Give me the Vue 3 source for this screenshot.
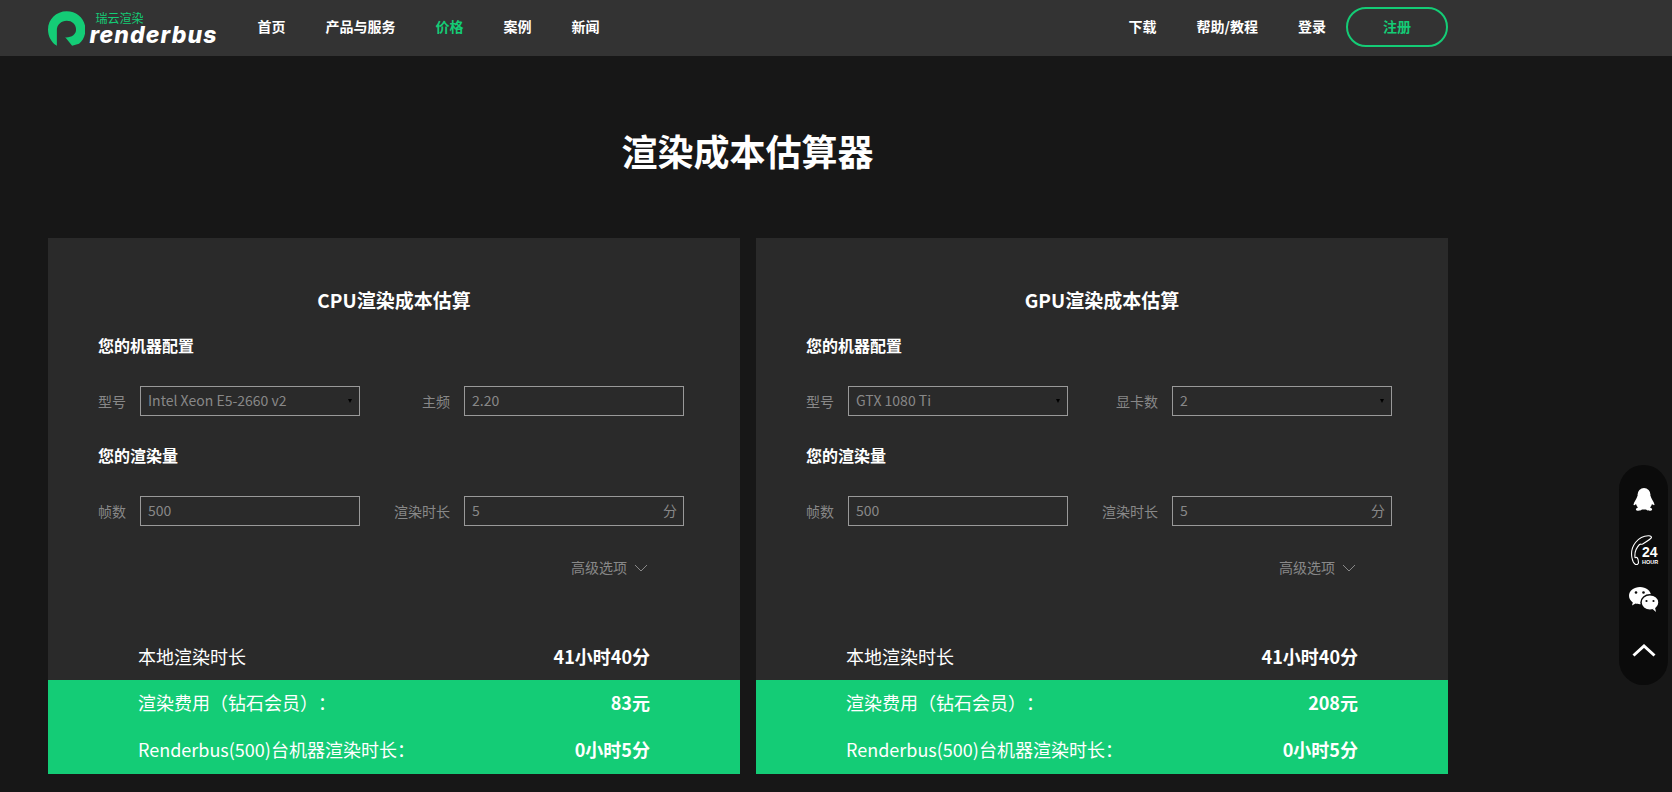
<script setup>
const navLeft = [
  { name: '首页' },
  { name: '产品与服务' },
  { name: '价格', active: true },
  { name: '案例' },
  { name: '新闻' }
]
const navRight = ['下载', '帮助/教程', '登录']

const cards = [
  {
    title: 'CPU渲染成本估算',
    model: 'Intel Xeon E5-2660 v2',
    secondLabel: '主频',
    secondValue: '2.20',
    secondSelect: false,
    fee: '83元'
  },
  {
    title: 'GPU渲染成本估算',
    model: 'GTX 1080 Ti',
    secondLabel: '显卡数',
    secondValue: '2',
    secondSelect: true,
    fee: '208元'
  }
]
</script>

<template>
  <div class="page">
    <header class="header">
      <div class="header-inner">
        <a class="logo">
          <svg class="logo-mark" width="38" height="36" viewBox="0 0 38 36">
            <path d="M9 35 C3.500 31.800 0 25.700 0 18.500 C0 8 8.500 0 19 0 C29.500 0 38 8 38 18.500 C38 24.500 35.500 29.800 31.500 33 L24.500 35 L17.500 26.500 C24 26.800 28.500 23.500 28.500 18.500 C28.500 13 24.500 9.500 19 9.500 C13.500 9.500 9 13.500 9 19 Z" fill="#14cc76" />
          </svg>
          <span class="logo-text">
            <span class="logo-cn">瑞云渲染</span>
            <span class="logo-en">renderbus</span>
          </span>
        </a>
        <nav class="nav">
          <a v-for="item in navLeft" :key="item.name" class="nav-item" :class="{ active: item.active }">{{ item.name }}</a>
        </nav>
        <nav class="nav nav-right">
          <a v-for="item in navRight" :key="item" class="nav-item">{{ item }}</a>
          <a class="register">注册</a>
        </nav>
      </div>
    </header>

    <main class="main">
      <h1 class="page-title">渲染成本估算器</h1>
      <div class="cards">
        <section v-for="card in cards" :key="card.title" class="card">
          <h2 class="card-title">{{ card.title }}</h2>
          <div class="form">
            <h3 class="section-title">您的机器配置</h3>
            <div class="form-row">
              <label class="label">型号</label>
              <div class="field select">{{ card.model }}</div>
              <label class="label label-second">{{ card.secondLabel }}</label>
              <div class="field" :class="{ select: card.secondSelect }">{{ card.secondValue }}</div>
            </div>
            <h3 class="section-title">您的渲染量</h3>
            <div class="form-row">
              <label class="label">帧数</label>
              <div class="field">500</div>
              <label class="label label-second">渲染时长</label>
              <div class="field">5<span class="unit">分</span></div>
            </div>
            <div class="advanced">
              <span>高级选项</span>
              <svg width="14" height="8" viewBox="0 0 14 8">
                <path d="M1 1 L7 7 L13 1" fill="none" stroke="#888" stroke-width="1" />
              </svg>
            </div>
          </div>
          <div class="result result-local">
            <span>本地渲染时长</span>
            <b>41小时40分</b>
          </div>
          <div class="result-green">
            <div class="result">
              <span>渲染费用（钻石会员）：</span>
              <b>{{ card.fee }}</b>
            </div>
            <div class="result">
              <span>Renderbus(500)台机器渲染时长：</span>
              <b>0小时5分</b>
            </div>
          </div>
        </section>
      </div>
    </main>

    <aside class="side">
      <svg class="side-qq" width="22" height="23" viewBox="0 0 22 23">
        <ellipse cx="11" cy="7" rx="6.500" ry="7" fill="#fff" />
        <path d="M4.500 8 C3.500 11 1 14 0.500 16.500 C0.500 17.500 1.500 17.500 3 16 C3.500 17.500 4 18.500 5 19.500 C3.500 20 2.500 21 3 22 C3.500 23 7.500 23 9 21.500 L13 21.500 C14.500 23 18.500 23 19 22 C19.500 21 18.500 20 17 19.500 C18 18.500 18.500 17.500 19 16 C20.500 17.500 21.500 17.500 21.500 16.500 C21 14 18.500 11 17.500 8 Z" fill="#fff" />
      </svg>
      <svg class="side-phone" width="30" height="30" viewBox="0 0 30 30">
        <path d="M20 0.700 C15 0.500 10 3 6.500 7.500 C3 12 2 18 3 23 C3.500 26 5 28.500 6.500 29.500 C8 29.800 9.500 29 9.500 27.500 C9.500 26 9 23.500 8 22.500 C7 22 6.500 23 6 22.500 C5.500 18 7 13 10.500 9.500 C11.500 8.800 12.500 9.500 13.500 9 C16 7.500 22 4 22.500 2.500 C22.500 1.300 21.500 0.800 20 0.700 Z" fill="none" stroke="#fff" stroke-width="1.100" />
        <text x="13" y="22" class="side-24">24</text>
        <text x="13" y="29" class="side-hour">HOUR</text>
      </svg>
      <svg class="side-wechat" width="30" height="25" viewBox="0 0 30 25">
        <path d="M11 0 C5 0 0 3.800 0 8.800 C0 11.500 1.500 13.800 3.800 15.400 L3 18.500 L6.500 16.600 C7.800 17 9 17.200 11 17.200 C17 17.200 22 13.400 22 8.600 C22 3.800 17 0 11 0 Z" fill="#fff" />
        <ellipse cx="21" cy="15.500" rx="9" ry="7.800" fill="#fff" stroke="#0b0b0b" stroke-width="1.500" />
        <path d="M23.500 22 L27 25 L26 20.500 Z" fill="#fff" />
        <circle cx="7" cy="5.500" r="1.300" fill="#0b0b0b" />
        <circle cx="14.500" cy="5.500" r="1.300" fill="#0b0b0b" />
        <circle cx="17.500" cy="14" r="1.100" fill="#0b0b0b" />
        <circle cx="24.500" cy="14" r="1.100" fill="#0b0b0b" />
      </svg>
      <svg class="side-top" width="24" height="13" viewBox="0 0 24 13">
        <path d="M1.500 11.500 L12 2 L22.500 11.500" fill="none" stroke="#fff" stroke-width="3" />
      </svg>
    </aside>
  </div>
</template>

<style>
html, body {
  margin: 0;
  background: #171717;
  overflow: hidden;
}
</style>

<style scoped>
.page {
  height: 792px;
  background: #171717;
  font-family: "Noto Sans CJK SC", "Noto Sans", sans-serif;
  color: #fff;
  text-spacing-trim: space-all;
}

.header {
  height: 56px;
  background: #333;
}

.header-inner {
  width: 1400px;
  height: 56px;
  margin-left: 48px;
  display: flex;
  align-items: center;
}

.logo {
  display: flex;
  width: 169.5px;
  height: 56px;
  flex-shrink: 0;
}

.logo-mark {
  margin-top: 11px;
}

.logo-text {
  display: flex;
  flex-direction: column;
  margin-left: 4px;
}

.logo-cn {
  margin: 11px 0 0 6px;
  font-size: 12px;
  line-height: 14px;
  color: #14cc76;
}

.logo-en {
  margin-top: 1px;
  font-family: Inter, "Liberation Sans", sans-serif;
  font-size: 23px;
  line-height: 18px;
  font-weight: 800;
  font-style: italic;
  letter-spacing: 1.1px;
}

.nav {
  display: flex;
  align-items: center;
  gap: 40px;
  margin-top: -2px;
  margin-left: 40px;
}

.nav-right {
  margin-left: auto;
}

.nav-item {
  padding-bottom: 2px;
  font-size: 14px;
  font-weight: 700;
  color: #fff;
}

.nav-item.active {
  color: #14cc76;
}

.register {
  box-sizing: border-box;
  width: 102px;
  height: 40px;
  margin-left: -20px;
  border: 2px solid #14cc76;
  border-radius: 20px;
  text-align: center;
  font-size: 14px;
  font-weight: 700;
  line-height: 34px;
  color: #14cc76;
}

.main {
  width: 1400px;
  margin-left: 48px;
}

.page-title {
  margin: 0;
  padding-top: 69px;
  padding-right: 1px;
  font-size: 36px;
  line-height: 50px;
  font-weight: 700;
  text-align: center;
}

.cards {
  display: flex;
  gap: 16px;
  margin-top: 63px;
}

.card {
  width: 692px;
  height: 536px;
  padding-top: 49px;
  box-sizing: border-box;
  background: #2a2a2a;
}

.card-title {
  margin: 0;
  font-size: 19px;
  line-height: 26px;
  font-weight: 700;
  text-align: center;
}

.form {
  padding: 0 50px;
}

.section-title {
  margin: 20px 0 0;
  font-size: 16px;
  line-height: 24px;
  font-weight: 700;
}

.form-row + .section-title {
  margin-top: 27px;
}

.form-row {
  display: grid;
  grid-template-columns: 42px 220px 104px 220px;
  height: 30px;
  margin-top: 29px;
  align-items: center;
}

.label {
  padding-bottom: 1px;
  font-size: 14px;
  color: #888;
}

.label-second {
  padding-right: 14px;
  text-align: right;
}

.field {
  position: relative;
  box-sizing: border-box;
  height: 30px;
  padding-left: 7px;
  border: 1px solid #999;
  font-size: 14px;
  line-height: 26px;
  color: #888;
}

.select::after {
  content: "";
  position: absolute;
  right: 7px;
  top: 12px;
  border-left: 2px solid transparent;
  border-right: 2px solid transparent;
  border-top: 4px solid #000;
}

.unit {
  position: absolute;
  right: 6px;
  top: 0;
}

.advanced {
  display: flex;
  justify-content: flex-end;
  align-items: center;
  gap: 7px;
  height: 20px;
  margin-top: 32px;
  padding-right: 42px;
  font-size: 14px;
  line-height: 18px;
  color: #888;
}

.advanced span {
  padding-bottom: 2px;
}

.result {
  box-sizing: border-box;
  display: flex;
  justify-content: space-between;
  align-items: center;
  height: 46px;
  padding: 0 90px 3px;
  font-size: 18px;
}

.result-local {
  margin-top: 56px;
}

.result b {
  font-weight: 700;
}

.result-green {
  background: #14cc76;
}

.result-green .result {
  height: 47px;
}

.side {
  position: fixed;
  left: 1619px;
  top: 465px;
  width: 49px;
  height: 220px;
  display: flex;
  flex-direction: column;
  align-items: center;
  border-radius: 25px;
  background: #0b0b0b;
}

.side-qq {
  margin-top: 23px;
}

.side-phone {
  margin-top: 24px;
}

.side-wechat {
  margin-top: 22px;
}

.side-top {
  margin-top: 32px;
}

.side-24 {
  font-family: "Liberation Sans", sans-serif;
  font-size: 14px;
  font-weight: 700;
  fill: #fff;
}

.side-hour {
  font-family: "Liberation Sans", sans-serif;
  font-size: 5.500px;
  font-weight: 700;
  fill: #fff;
}
</style>
